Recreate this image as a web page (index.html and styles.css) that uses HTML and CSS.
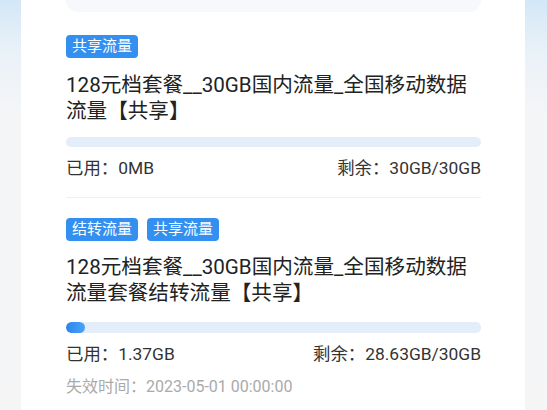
FILE: index.html
```html
<!DOCTYPE html>
<html lang="zh-CN">
<head>
<meta charset="utf-8">
<link rel="stylesheet" href="styles.css">
</head>
<body>
<div class="page">
  <div class="card">
    <div class="top-box"></div>

    <div class="item">
      <div class="tags">
        <span class="tag">共享流量</span>
      </div>
      <div class="title">128元档套餐__30GB国内流量_全国移动数据流量【共享】</div>
      <div class="bar"><div class="fill" style="width:0%"></div></div>
      <div class="stats">
        <span>已用：0MB</span>
        <span>剩余：30GB/30GB</span>
      </div>
    </div>

    <div class="divider"></div>

    <div class="item item-2">
      <div class="tags">
        <span class="tag">结转流量</span>
        <span class="tag">共享流量</span>
      </div>
      <div class="title">128元档套餐__30GB国内流量_全国移动数据流量套餐结转流量【共享】</div>
      <div class="bar bar-2"><div class="fill" style="width:4.6%"></div></div>
      <div class="stats stats-2">
        <span>已用：1.37GB</span>
        <span>剩余：28.63GB/30GB</span>
      </div>
      <div class="expire">失效时间：2023-05-01 00:00:00</div>
    </div>
  </div>
</div>
</body>
</html>
```

FILE: styles.css
```css
* { box-sizing: border-box; }
html, body {
  margin: 0;
  padding: 0;
}
body {
  width: 547px;
  height: 410px;
  overflow: hidden;
  font-family: Roboto, "Noto Sans CJK SC", sans-serif;
  color: #333;
  background: linear-gradient(to bottom, #d3e7f7 0px, #e9f1f8 50px, #f4f5f7 110px, #f5f5f6 410px);
}
.page {
  padding: 0 22px 0 21px;
  height: 410px;
}
.card {
  background: #fff;
  height: 410px;
  padding: 0 44px 0 45px;
}
.top-box {
  height: 12px;
  background: #f6f8fb;
  border-radius: 0 0 12px 12px;
}
.item {
  padding-top: 23px;
}
.item-2 {
  padding-top: 20px;
}
.tags {
  display: flex;
  gap: 9px;
}
.tag {
  display: inline-block;
  height: 23px;
  line-height: 23px;
  padding: 0 6px;
  font-size: 15px;
  font-weight: 400;
  color: #fff;
  background: #3390f0;
  border-radius: 4px;
}
.title {
  margin-top: 14px;
  font-size: 20.6px;
  line-height: 26px;
  color: #222;
}
.item-2 .title {
  margin-top: 13px;
}
.bar {
  margin-top: 13px;
  height: 10px;
  border-radius: 5px;
  background: #e4eefb;
  overflow: hidden;
}
.bar-2 {
  margin-top: 16px;
  height: 11px;
}
.fill {
  height: 100%;
  border-radius: 6px;
  background: linear-gradient(to right, #2b86ee, #4aa3f6);
}
.stats {
  margin-top: 10px;
  display: flex;
  justify-content: space-between;
  font-size: 17.4px;
  line-height: 22px;
  color: #333;
}
.stats-2 {
  margin-top: 10px;
}
.divider {
  margin-top: 18px;
  height: 1px;
  background: #f0f0f0;
}
.expire {
  margin-top: 11px;
  font-size: 16px;
  line-height: 22px;
  color: #aaa;
}
```
